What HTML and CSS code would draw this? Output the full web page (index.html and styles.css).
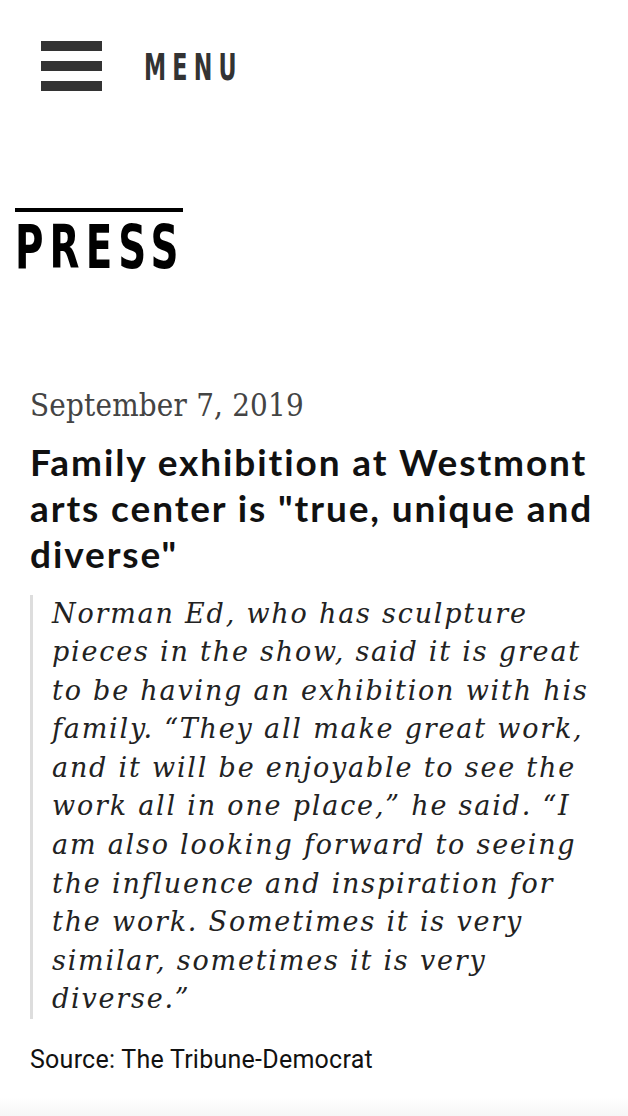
FILE: index.html
```html
<!DOCTYPE html>
<html lang="en">
<head>
<meta charset="utf-8">
<title>Press</title>
<link rel="stylesheet" href="styles.css">
</head>
<body>
<header class="site-header">
  <button class="menu-toggle" type="button">
    <span class="burger" aria-hidden="true"><i></i><i></i><i></i></span>
    <span class="menu-label">MENU</span>
  </button>
</header>
<main class="page">
  <h1 class="page-title"><span class="page-title-text">PRESS</span></h1>
  <article class="press-item">
    <p class="press-date">September 7, 2019</p>
    <h2 class="press-headline">Family exhibition at Westmont arts center is "true, unique and diverse"</h2>
    <blockquote class="press-quote">Norman Ed, who has sculpture pieces in the show, said it is great to be having an exhibition with his family. “They all make great work, and it will be enjoyable to see the work all in one place,” he said. “I am also looking forward to seeing the influence and inspiration for the work. Sometimes it is very similar, sometimes it is very diverse.”</blockquote>
    <p class="press-source">Source: The Tribune-Democrat</p>
  </article>
</main>
<div class="bottom-fade"></div>
</body>
</html>
```
FILE: styles.css
```css
* { box-sizing: border-box; }
html, body { margin: 0; padding: 0; background: #fff; }
body { font-family: "Roboto", "Liberation Sans", sans-serif; color: #111; }

.site-header { padding: 41px 0 0 41px; height: 92px; }
.menu-toggle {
  display: flex; align-items: center; gap: 42px;
  background: none; border: 0; padding: 0; margin: 0; cursor: pointer;
}
.burger { display: flex; flex-direction: column; gap: 10px; width: 61px; }
.burger i { display: block; height: 10px; background: #333; }
.menu-label {
  display: inline-block;
  font-family: "DejaVu Sans", sans-serif; font-stretch: condensed;
  font-weight: 700; font-size: 38px; line-height: 1;
  color: #333; letter-spacing: 9.5px;
  transform: scaleX(0.65); transform-origin: left center;
  margin-top: 2px;
}

.page { padding: 116px 30px 0 30px; }
.page-title {
  margin: 0 0 0 -15px; padding: 5px 0 0 0; width: 168px;
  border-top: 4px solid #000; line-height: 60px; font-size: 60px;
}
.page-title-text {
  display: block;
  font-family: "DejaVu Sans", sans-serif; font-stretch: condensed;
  font-weight: 700; font-size: 60px; line-height: 60px; color: #000; letter-spacing: 8.5px;
  white-space: nowrap;
  transform: scaleX(0.72); transform-origin: left top;
}

.press-item { padding-top: 110px; }
.press-date {
  margin: 0; font-family: "DejaVu Serif", serif; font-stretch: condensed;
  font-size: 31px; line-height: 36px; color: #444; letter-spacing: 0.2px;
}
.press-headline {
  margin: 16px 0 17.5px 0; font-family: "Lato", sans-serif; font-weight: 700;
  font-size: 37px; line-height: 46px; color: #111; letter-spacing: 1.9px;
}
.press-quote {
  margin: 0; padding: 0 0 0 19px; border-left: 3px solid #ddd;
  font-family: "DejaVu Serif", serif; font-style: italic; font-size: 27px;
  line-height: 38.6px; color: #222; letter-spacing: 1.8px;
}
.press-source {
  margin: 26px 0 0 0; font-family: "Roboto", sans-serif; font-size: 25px; line-height: 30px;
  color: #111; letter-spacing: 0.25px;
}

.bottom-fade {
  position: fixed; left: 0; right: 0; bottom: 0; height: 18px;
  background: linear-gradient(#fff, #f6f6f6);
}
```
